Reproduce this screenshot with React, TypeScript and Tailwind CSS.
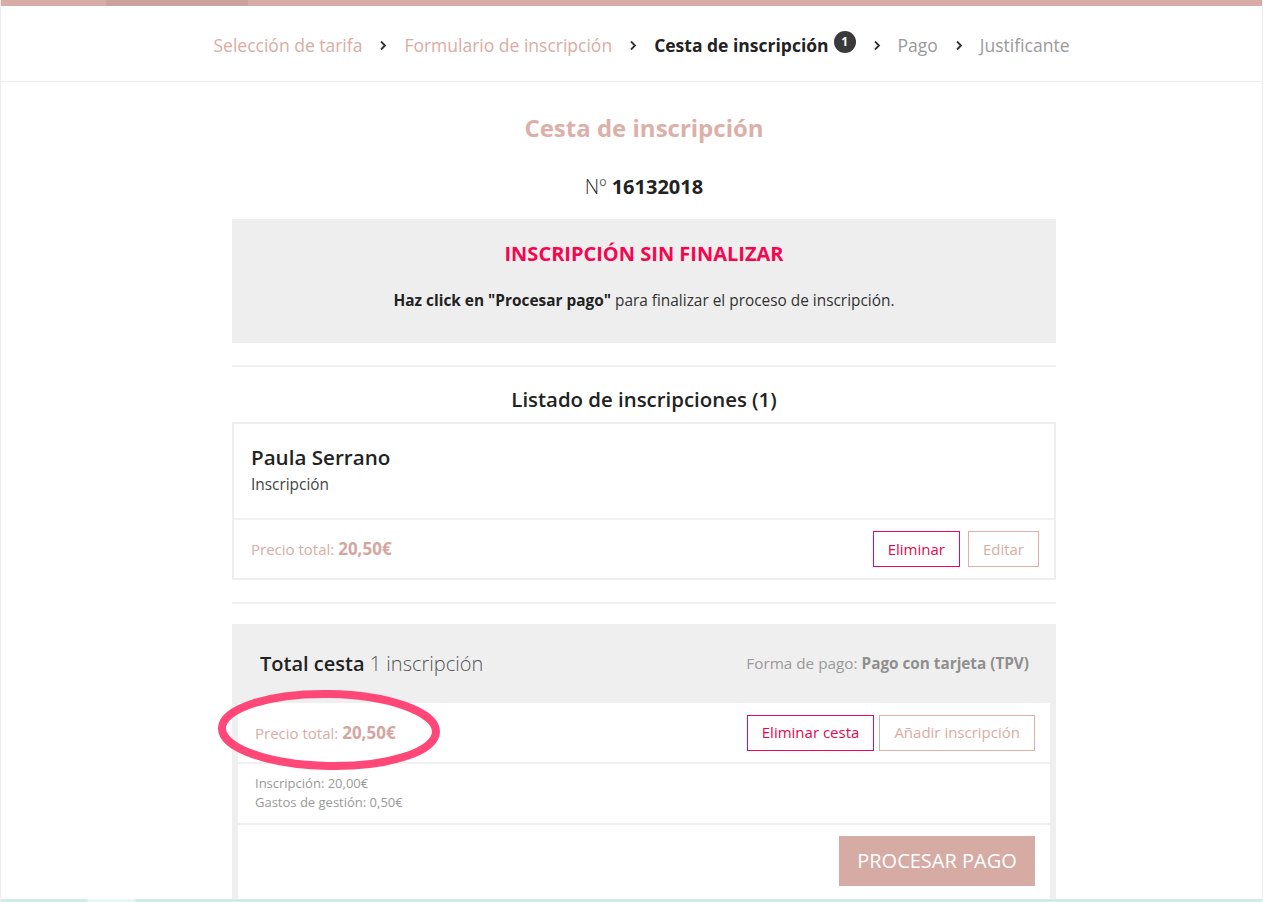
import { ReactNode } from "react"

const font = { fontFamily: '"Open Sans", "Noto Sans", sans-serif' }

function Chevron() {
  return (
    <svg width="8" height="11" viewBox="0 0 8 11" className="mx-[17px] shrink-0">
      <path d="M2 1.5 L6 5.5 L2 9.5" fill="none" stroke="#333" strokeWidth="1.8" />
    </svg>
  )
}

function OutlineButton({ children, tone }: { children: ReactNode; tone: "red" | "pink" }) {
  const cls =
    tone === "red"
      ? "border-[#ec0a52] text-[#e3084d]"
      : "border-[#dcb0a9] text-[#d9aca5]"
  return (
    <button className={`h-9 px-[14px] border bg-white text-[15px] leading-none ${cls}`}>{children}</button>
  )
}

function Divider() {
  return <div className="h-[2px] bg-[#f0f0f0]" />
}

export default function App() {
  const steps = [
    { label: "Selección de tarifa", state: "done" },
    { label: "Formulario de inscripción", state: "done" },
    { label: "Cesta de inscripción", state: "active" },
    { label: "Pago", state: "todo" },
    { label: "Justificante", state: "todo" },
  ]

  return (
    <div className="min-h-[902px] bg-white text-[#222] border-l border-r border-[#ececec] relative" style={font}>
      {/* top bar */}
      <div className="h-[6px] flex bg-[#d8aca6]">
        <div className="w-[105px]" />
        <div className="w-[142px] bg-[#cca39c]" />
      </div>

      {/* steps */}
      <header className="h-[76px] border-b border-[#ececec] flex items-center justify-center pt-[4px] pl-[20px]">
        {steps.map((s, i) => (
          <div key={s.label} className="flex items-center">
            {i > 0 && <Chevron />}
            <span
              className={
                s.state === "done"
                  ? "text-[17.5px] text-[#d9aca5]"
                  : s.state === "active"
                    ? "text-[17.5px] font-bold text-[#222]"
                    : "text-[17.5px] text-[#9a9a9a]"
              }
            >
              {s.label}
            </span>
            {s.state === "active" && (
              <span className="ml-[5px] -mt-[7px] w-[22px] h-[22px] rounded-full bg-[#3a3a3a] text-white text-[12px] font-bold flex items-center justify-center">
                1
              </span>
            )}
          </div>
        ))}
      </header>

      <main className="w-[824px] ml-[231px]">
        <h1 className="pt-[31px] text-center text-[24px] leading-[30px] font-bold text-[#dcb0a9]">
          Cesta de inscripción
        </h1>
        <p className="mt-[29px] text-center text-[20px] leading-[30px]">
          <span className="font-light text-[#333]">Nº</span> <span className="font-bold">16132018</span>
        </p>

        <section className="mt-[17px] h-[124px] bg-[#eeeeee] text-center pt-[22px]">
          <h2 className="text-[20px] leading-[26px] font-bold text-[#f7054f]">INSCRIPCIÓN SIN FINALIZAR</h2>
          <p className="mt-[24px] text-[15.4px] leading-[20px] text-[#333]">
            <b className="text-[#222]">Haz click en "Procesar pago"</b> para finalizar el proceso de inscripción.
          </p>
        </section>

        <div className="mt-[22px]">
          <Divider />
        </div>

        <h3 className="mt-[19px] text-center text-[20.4px] leading-[26px] font-semibold">Listado de inscripciones (1)</h3>

        <div className="mt-[10px] border-2 border-[#eeeeee]">
          <div className="h-[94px] px-[17px] pt-[20px]">
            <div className="text-[20.6px] leading-[26px] font-semibold">Paula Serrano</div>
            <div className="mt-[5px] text-[15.4px] leading-[20px] text-[#444]">Inscripción</div>
          </div>
          <Divider />
          <div className="h-[58px] pl-[17px] pr-[15px] flex items-center justify-between">
            <div className="text-[15px] text-[#d9aca5]">
              Precio total: <b className="text-[17px] text-[#d4a69f]">20,50€</b>
            </div>
            <div className="flex gap-2">
              <OutlineButton tone="red">Eliminar</OutlineButton>
              <OutlineButton tone="pink">Editar</OutlineButton>
            </div>
          </div>
        </div>

        <div className="mt-[22px]">
          <Divider />
        </div>

        <section className="mt-[20px] bg-[#efefef] px-[6px]">
          <div className="h-[79px] pl-[22px] pr-[21px] flex items-center justify-between">
            <div className="text-[20px]">
              <span className="font-semibold text-[#222]">Total cesta</span>{" "}
              <span className="font-light text-[#555]">1 inscripción</span>
            </div>
            <div className="text-[15.3px] text-[#999]">
              Forma de pago: <b className="text-[#8f8f8f]">Pago con tarjeta (TPV)</b>
            </div>
          </div>
          <div className="bg-white">
            <div className="h-[59px] pl-[17px] pr-[15px] flex items-center justify-between">
              <div className="text-[15px] text-[#d9aca5]">
                Precio total: <b className="text-[17px] text-[#d4a69f]">20,50€</b>
              </div>
              <div className="flex gap-[5px]">
                <OutlineButton tone="red">Eliminar cesta</OutlineButton>
                <OutlineButton tone="pink">Añadir inscripción</OutlineButton>
              </div>
            </div>
            <Divider />
            <div className="h-[59px] px-[17px] pt-[10px] text-[13px] leading-[19px] text-[#999]">
              <div>Inscripción: 20,00€</div>
              <div>Gastos de gestión: 0,50€</div>
            </div>
            <Divider />
            <div className="px-[15px] pt-[11px] pb-[20px] flex justify-end">
              <button className="h-[50px] w-[196px] bg-[#d6aba4] text-white text-[20px]">PROCESAR PAGO</button>
            </div>
          </div>
        </section>
      </main>

      {/* hand-drawn highlight */}
      <svg className="absolute left-[211px] top-[684px] pointer-events-none" width="236" height="92" viewBox="0 0 236 92">
        <ellipse cx="117" cy="46" rx="107" ry="36" fill="none" stroke="#ff4877" strokeWidth="8" transform="rotate(1 117 46)" />
      </svg>

      {/* bottom strip */}
      <div className="absolute left-0 right-0 top-[899px] h-[3px] flex bg-[#cdeee7]">
        <div className="w-[86px]" />
        <div className="w-[48px] bg-[#e6f7f4]" />
      </div>
    </div>
  )
}
